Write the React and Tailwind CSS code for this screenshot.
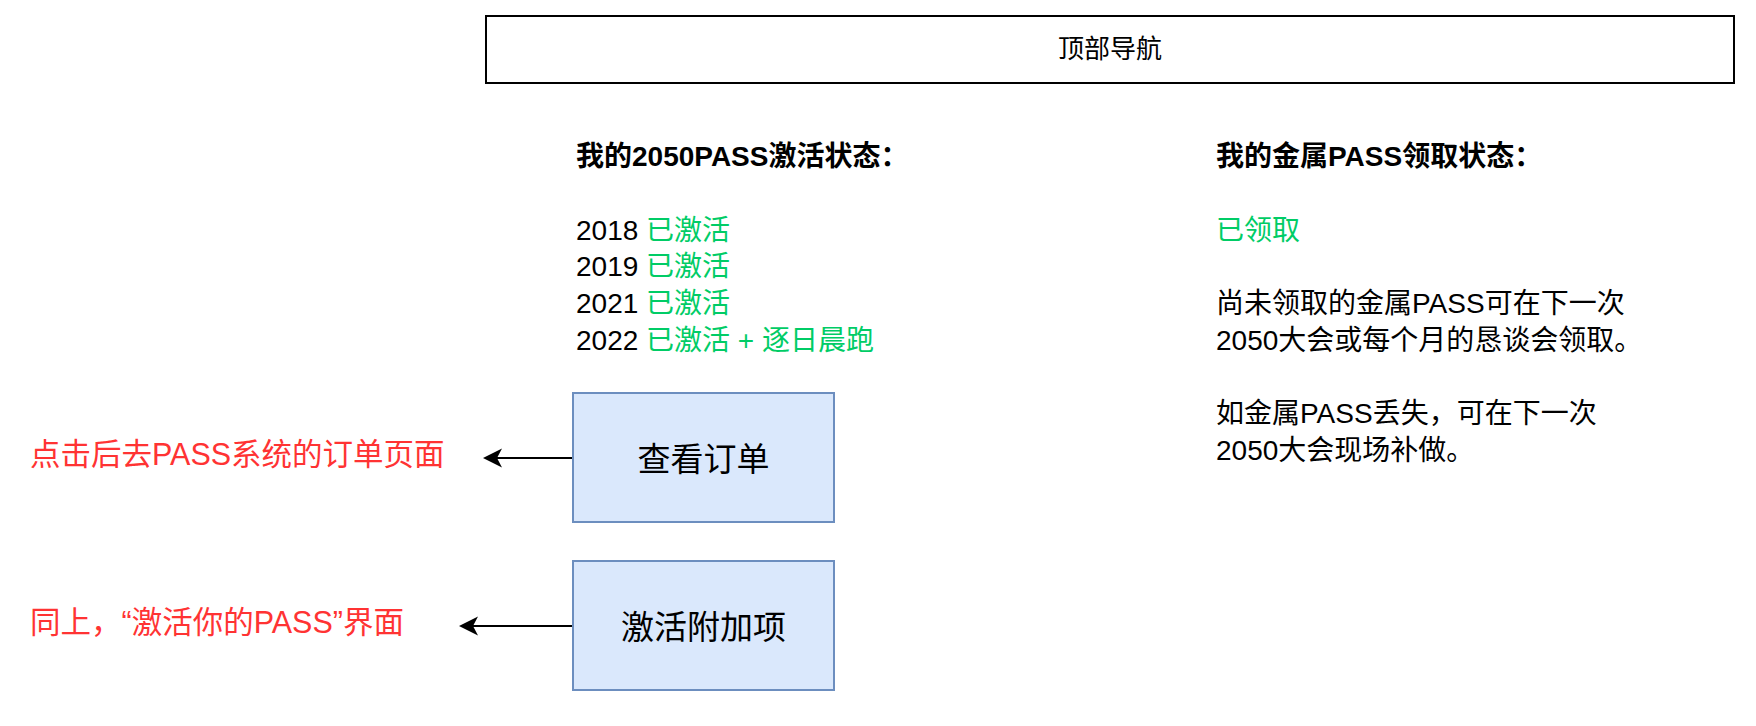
import React from "react";

const font = { fontFamily: '"Liberation Sans", "Noto Sans CJK SC", sans-serif' };

function Arrow({ length }) {
    return (
        <svg width={length} height="20" viewBox={`0 0 ${length} 20`} className="shrink-0">
            <line x1={length} y1="10" x2="12" y2="10" stroke="#000" strokeWidth="2" />
            <path d="M0 10 L19 0.5 L14 10 L19 19.5 Z" fill="#000" />
        </svg>
    );
}

function ActionRow({ note, noteWidth, arrowLength, label }) {
    return (
        <div className="flex items-center h-[131px]">
            <div
                className="pl-[30px] -mt-[7px] text-[30.5px] leading-none text-[#ff3333] whitespace-nowrap shrink-0"
                style={{ width: noteWidth }}
            >
                {note}
            </div>
            <Arrow length={arrowLength} />
            <div className="w-[263px] h-[131px] shrink-0 border-2 border-[#6c8ebf] bg-[#dae8fc] flex items-center justify-center text-[33px] text-black pt-[4px]">
                {label}
            </div>
        </div>
    );
}

export default function App() {
    // 激活记录
    const years = [
        { year: "2018", status: "已激活" },
        { year: "2019", status: "已激活" },
        { year: "2021", status: "已激活" },
        { year: "2022", status: "已激活 + 逐日晨跑" },
    ];

    return (
        <div className="w-[1756px] h-[726px] bg-white text-black overflow-hidden" style={font}>
            {/* 顶部导航 */}
            <div className="pt-[15px] pl-[485px]">
                <div className="w-[1250px] h-[69px] border-2 border-black flex items-center justify-center text-[26px]">
                    顶部导航
                </div>
            </div>

            <div className="flex items-start mt-[55px]">
                <div className="w-[1216px] shrink-0 flex flex-col">
                    {/* PASS 激活状态 */}
                    <div className="pl-[576px] text-[28px] leading-[36.75px] whitespace-nowrap">
                        <div className="font-bold">我的2050PASS激活状态：</div>
                        <div className="h-[36.75px]"></div>
                        {years.map((y) => (
                            <div key={y.year}>
                                {y.year} <span className="text-[#00cc66]">{y.status}</span>
                            </div>
                        ))}
                    </div>

                    <div className="mt-[32.5px] flex flex-col gap-[37px]">
                        <ActionRow
                            note="点击后去PASS系统的订单页面"
                            noteWidth={483}
                            arrowLength={89}
                            label="查看订单"
                        />
                        <ActionRow
                            note="同上，“激活你的PASS”界面"
                            noteWidth={459}
                            arrowLength={113}
                            label="激活附加项"
                        />
                    </div>
                </div>

                {/* 金属PASS 领取状态 */}
                <div className="text-[28px] leading-[36.75px] whitespace-nowrap">
                    <div className="font-bold">我的金属PASS领取状态：</div>
                    <div className="h-[36.75px]"></div>
                    <div className="text-[#00cc66]">已领取</div>
                    <div className="h-[36.75px]"></div>
                    <div>尚未领取的金属PASS可在下一次</div>
                    <div>2050大会或每个月的恳谈会领取。</div>
                    <div className="h-[36.75px]"></div>
                    <div>如金属PASS丢失，可在下一次</div>
                    <div>2050大会现场补做。</div>
                </div>
            </div>
        </div>
    );
}
